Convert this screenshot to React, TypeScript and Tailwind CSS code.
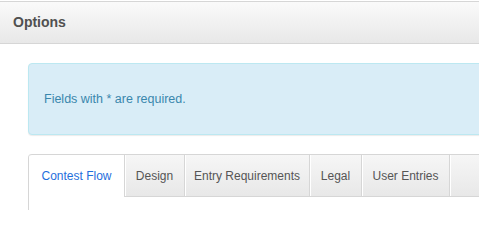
import React from "react";

const tabs = [
  { label: "Design", w: "w-[60px]" },
  { label: "Entry Requirements", w: "w-[125px]" },
  { label: "Legal", w: "w-[52px]" },
  { label: "User Entries", w: "w-[88px]" },
];

export default function App() {
  return (
    <div className="w-[479px] h-[210px] overflow-hidden bg-white font-['Liberation_Sans',Arial,sans-serif]">
      <div className="w-[520px] mt-px h-[43px] border-t border-b border-[#d6d6d6] bg-gradient-to-b from-[#fafafa] to-[#e8e8e8] px-[13px] flex items-center">
        <span className="text-[14px] font-bold text-[#505050]">Options</span>
      </div>
      <div className="ml-[28px] mt-[19px] w-[500px] h-[72px] border border-[#bce8f1] bg-[#d9edf7] rounded-[4px] shadow-[0_1px_1px_rgba(0,0,0,0.08)] flex items-center pl-[15px]">
        <span className="text-[12.5px] text-[#3a87ad]">Fields with * are required.</span>
      </div>
      <div className="ml-[28px] mt-[19px] w-[520px] border-l border-[#d6d6d6] rounded-tl-[4px]">
        <div className="flex items-start">
          <div className="w-[96px] shrink-0 h-[43px] border-t border-r border-[#d6d6d6] rounded-tl-[3px] bg-white flex items-center justify-center text-[12px] text-[#1f6fdc]">
            Contest Flow
          </div>
          {tabs.map((t) => (
            <div
              key={t.label}
              className={`${t.w} shrink-0 h-[43px] border-t border-r border-b border-[#d6d6d6] bg-gradient-to-b from-[#f6f6f6] to-[#e8e8e8] shadow-[inset_1px_0_0_#fff] flex items-center justify-center text-[12px] text-[#555] whitespace-nowrap`}
            >
              {t.label}
            </div>
          ))}
          <div className="w-[80px] shrink-0 h-[43px] border-t border-r border-b border-[#d6d6d6] bg-gradient-to-b from-[#f6f6f6] to-[#e8e8e8] shadow-[inset_1px_0_0_#fff]" />
        </div>
        <div className="h-[30px]" />
      </div>
    </div>
  );
}
